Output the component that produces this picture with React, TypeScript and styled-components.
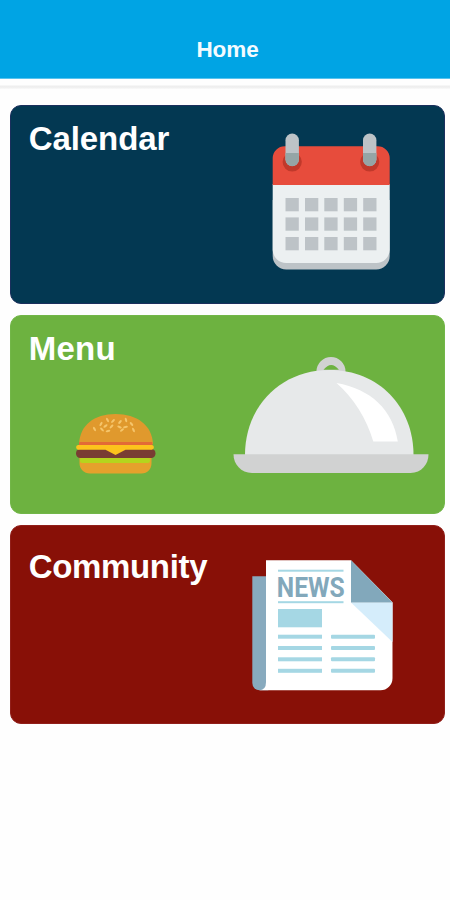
import React from "react";
import styled, { createGlobalStyle } from "styled-components";

const GlobalStyle = createGlobalStyle`
  body {
    margin: 0;
    background: #fefefe;
    font-family: "Liberation Sans", Arial, Helvetica, sans-serif;
  }
`;

const Screen = styled.div`
  width: 450px;
  height: 900px;
  overflow: hidden;
`;

const Header = styled.header`
  box-sizing: border-box;
  height: 79px;
  padding: 37px 0 0 5px;
  background: #00a4e4;
  border-bottom: 1px solid #58c3ee;
  text-align: center;
`;

const HeaderTitle = styled.h1`
  margin: 0;
  color: #f3fbff;
  font-size: 22.5px;
  line-height: 26px;
  font-weight: 700;
  letter-spacing: -0.1px;
`;

const Divider = styled.div`
  height: 4px;
  margin-top: 6px;
  background: linear-gradient(#fafafa, #ececec 45%, #fafafa);
`;

const CardList = styled.main`
  display: flex;
  flex-direction: column;
  gap: 10.5px;
  padding: 16px 4.6px 0 10.4px;
`;

const Card = styled.section<{ $color: string; $edge: string }>`
  box-sizing: border-box;
  display: flex;
  justify-content: space-between;
  align-items: flex-start;
  height: 199.3px;
  border-radius: 11px;
  border: 1px solid ${(p) => p.$edge};
  background: ${(p) => p.$color};
`;

const CardText = styled.div<{ $top: number }>`
  padding: ${(p) => p.$top}px 0 0 17.4px;
`;

const CardTitle = styled.h2<{ $spacing: number }>`
  margin: 0;
  color: #fff;
  font-size: 33px;
  line-height: 38px;
  font-weight: 700;
  letter-spacing: ${(p) => p.$spacing}px;
`;

const Art = styled.svg<{ $top: number; $left?: number; $right?: number }>`
  display: block;
  flex: none;
  margin: ${(p) => p.$top}px ${(p) => p.$right ?? 0}px 0 ${(p) => p.$left ?? 0}px;
`;

const columns = [285.5, 305, 324.3, 343.8, 363.2];
const rows = [198, 217.4, 237];

function CalendarArt() {
  return (
    <Art $top={27} $right={54.4} width="118" height="138" viewBox="272 133 118 138">
      <path d="M272.7 200h117v56a13.5 13.5 0 0 1-13.5 13.5h-90a13.5 13.5 0 0 1-13.5-13.5z" fill="#bdc3c7" />
      <path d="M272.7 184h117v66a13.5 13.5 0 0 1-13.5 13h-90a13.5 13.5 0 0 1-13.5-13z" fill="#ecf0f1" />
      <path d="M272.7 185v-27a12 12 0 0 1 12-11.8h93a12 12 0 0 1 12 11.8v27z" fill="#e74c3c" />
      {[292.2, 369.7].map((x) => (
        <g key={x}>
          <path d={`M${x - 6.6} 155a9.6 9.6 0 1 0 13.2 0z`} fill="#c0392b" />
          <rect x={x - 6.7} y="133.5" width="13.4" height="32.5" rx="6.7" fill="#bdc3c7" />
          <path d={`M${x - 6.7} 153h13.4v6.5a6.7 6.7 0 0 1-13.4 0z`} fill="#95a5a6" />
        </g>
      ))}
      {rows.map((y) =>
        columns.map((x) => <rect key={`${x}-${y}`} x={x} y={y} width="13.3" height="13.3" fill="#bdc3c7" />)
      )}
    </Art>
  );
}

function ClocheArt() {
  return (
    <Art $top={41.5} $right={15.4} width="196" height="117" viewBox="233 357 196 117">
      <path
        d="M316.5 373v-1.5a14.5 14.5 0 0 1 29 0v1.5z M323.5 369.7h15.4q-7.7-9.5-15.4 0z"
        fill="#d1d2d2"
        fillRule="evenodd"
      />
      <path d="M245 455c0-48 35-85 84.5-85s84 37 84 85z" fill="#e7e9ea" />
      <path d="M336.5 383q26 23 36.8 58.5h24.5C393 410 371 389 336.5 383z" fill="#fff" />
      <path d="M233.5 454.3h195c0 10-7 18.7-18 18.7H252c-11 0-18.5-8.7-18.5-18.7z" fill="#d1d2d2" />
    </Art>
  );
}

const seeds: [number, number, number][] = [
  [94.5, 430, 60], [101, 425, -60], [102, 430.5, 45], [105.5, 427, -35],
  [107.5, 421, 60], [111.5, 427.5, -45], [108, 432, -15], [113, 422, -45],
  [119.5, 428, 25], [120, 423, -50], [122, 431, -40], [126, 421, 75],
  [125.5, 428, -10], [131.5, 425, 50], [133.5, 431, 65],
];

function BurgerArt() {
  return (
    <Art $top={45} $left={46.2} width="82" height="62" viewBox="75 414 82 62">
      <path d="M79 445c1-19 15-30 36.5-30s36.5 11 37.5 30z" fill="#e0992d" />
      {seeds.map(([x, y, angle]) => (
        <ellipse key={`${x}-${y}`} cx={x} cy={y} rx="2.4" ry="1.1" fill="#f5c56b" transform={`rotate(${angle} ${x} ${y})`} />
      ))}
      <path d="M79.5 458h72v6c0 6-4 10.5-10 10.5H90c-6 0-10.5-4.5-10.5-10.5z" fill="#e5a12c" />
      <rect x="79" y="443" width="73.5" height="4" rx="1" fill="#e36a36" />
      <rect x="80" y="458.5" width="70" height="5.5" rx="2" fill="#b5d51d" />
      <rect x="76" y="450" width="79.5" height="9" rx="4.2" fill="#793d33" />
      <path d="M78 446h74a2.4 2.4 0 0 1 0 4.7h-26.5l-10 5.3-10-5.3H78a2.4 2.4 0 0 1 0-4.7z" fill="#fdc31c" />
    </Art>
  );
}

const NewsText = styled.text`
  font-family: Roboto, "Liberation Sans", sans-serif;
  font-size: 28.5px;
  font-weight: 700;
  fill: #82a8bb;
`;

function NewsArt() {
  return (
    <Art $top={33.5} $right={50.4} width="142" height="132" viewBox="252 559 142 132">
      <path d="M252.3 576.3h16v114h-8.8a7.2 7.2 0 0 1-7.2-7.2z" fill="#88aabe" />
      <path d="M266 560.3h85l41.5 42v76a12 12 0 0 1-12 12H259q7 0 7-8z" fill="#fff" />
      <path d="M351 602.5h41.5V642z" fill="#d5edfb" />
      <path d="M351 560.3l41.5 42.2H351z" fill="#82a8bb" />
      <g fill="#a5d7e4">
        <rect x="278" y="569.7" width="65.5" height="2" />
        <rect x="278" y="601.2" width="65.5" height="2" />
        <rect x="278" y="609" width="44" height="18.3" />
        {[634.7, 646, 657.3, 668.8].map((y) => (
          <React.Fragment key={y}>
            <rect x="278" y={y} width="44" height="4" />
            <rect x="331" y={y} width="44" height="4" rx="1" />
          </React.Fragment>
        ))}
      </g>
      <NewsText x="276.8" y="596.7" textLength="68" lengthAdjust="spacingAndGlyphs">
        NEWS
      </NewsText>
    </Art>
  );
}

export default function App() {
  return (
    <>
      <GlobalStyle />
      <Screen>
        <Header>
          <HeaderTitle>Home</HeaderTitle>
        </Header>
        <Divider />
        <CardList>
          <Card $color="#033852" $edge="#1b2f5d">
            <CardText $top={14}>
              <CardTitle $spacing={-0.1}>Calendar</CardTitle>
            </CardText>
            <CalendarArt />
          </Card>
          <Card $color="#6db240" $edge="#72b648">
            <CardText $top={14}>
              <CardTitle $spacing={0.2}>Menu</CardTitle>
              <BurgerArt />
            </CardText>
            <ClocheArt />
          </Card>
          <Card $color="#881007" $edge="#911f1a">
            <CardText $top={22.5}>
              <CardTitle $spacing={-0.35}>Community</CardTitle>
            </CardText>
            <NewsArt />
          </Card>
        </CardList>
      </Screen>
    </>
  );
}
